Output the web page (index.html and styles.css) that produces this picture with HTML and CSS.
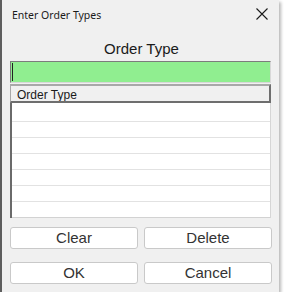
FILE: index.html
```html
<!DOCTYPE html>
<html>
<head>
<meta charset="utf-8">
<link rel="stylesheet" href="styles.css">
</head>
<body>
<div class="window">
  <div class="titlebar">
    <span class="title">Enter Order Types</span>
    <span class="close">
      <svg width="12" height="12" viewBox="0 0 12 12"><path d="M0.5 0.5 L11.5 11.5 M11.5 0.5 L0.5 11.5" stroke="#1a1a1a" stroke-width="1.1" fill="none"/></svg>
    </span>
  </div>
  <div class="content">
    <div class="heading">Order Type</div>
    <div class="input"><span class="caret"></span></div>
    <div class="table">
      <div class="thead">Order Type</div>
      <div class="tbody">
        <div class="row"></div>
        <div class="row"></div>
        <div class="row"></div>
        <div class="row"></div>
        <div class="row"></div>
        <div class="row"></div>
        <div class="row last"></div>
      </div>
    </div>
    <div class="buttons">
      <button class="btn">Clear</button>
      <button class="btn">Delete</button>
      <button class="btn">OK</button>
      <button class="btn">Cancel</button>
    </div>
  </div>
</div>
</body>
</html>
```

FILE: styles.css
```css
html, body {
  margin: 0;
  padding: 0;
  background: #ffffff;
}
.window {
  width: 277px;
  height: 292px;
  background: #f0f0f0;
  border-left: 2px solid #5e5e5e;
  box-shadow: 2px 2px 3px rgba(0,0,0,0.28);
  font-family: "Liberation Sans", Arial, sans-serif;
  box-sizing: content-box;
}
.titlebar {
  height: 28px;
  display: flex;
  align-items: center;
  justify-content: space-between;
  padding-left: 10px;
  padding-right: 11px;
}
.title {
  font-family: "Noto Sans", sans-serif;
  font-size: 10.5px;
  color: #1a1a1a;
  line-height: 14px;
  padding-top: 1px;
}
.close {
  display: flex;
  width: 12px;
  height: 12px;
}
.content {
  padding: 0 6px 0 8px;
}
.heading {
  padding-top: 12px;
  height: 18px;
  line-height: 18px;
  font-size: 15px;
  color: #1a1a1a;
  text-align: center;
}
.input {
  margin-top: 3px;
  height: 20px;
  width: 258px;
  background: #90ee90;
  border-top: 1px solid #7c7c7c;
  border-left: 1px solid #7c7c7c;
  border-right: 1px solid #d8d8d8;
  border-bottom: 1px solid #d8d8d8;
  display: flex;
  align-items: center;
  padding-left: 1px;
}
.caret {
  width: 1px;
  height: 18px;
  background: #222;
}
.table {
  margin-top: 1px;
  width: 261px;
}
.thead {
  height: 15px;
  border-top: 2px solid #a8a8a8;
  border-left: 1px solid #a8a8a8;
  border-right: 2px solid #6e6e6e;
  border-bottom: 2px solid #6e6e6e;
  background: #f0f0f0;
  font-size: 12px;
  line-height: 18px;
  padding-left: 6px;
  color: #1a1a1a;
  overflow: hidden;
}
.tbody {
  background: #ffffff;
  border-left: 2px solid #6a6a6a;
  border-right: 1px solid #d6d6d6;
  padding-top: 3px;
}
.row {
  height: 15px;
  border-bottom: 1px solid #e2e2e2;
}
.row.last {
  border-bottom-color: #d2d2d2;
}
.buttons {
  margin-top: 9px;
  display: grid;
  grid-template-columns: 128px 128px;
  column-gap: 6px;
  row-gap: 13px;
}
.btn {
  height: 22px;
  margin: 0;
  padding: 0;
  background: #ffffff;
  border: 1px solid #c9c9c9;
  border-radius: 3px;
  font-family: "Liberation Sans", Arial, sans-serif;
  font-size: 15px;
  color: #333333;
  line-height: 20px;
}
```
